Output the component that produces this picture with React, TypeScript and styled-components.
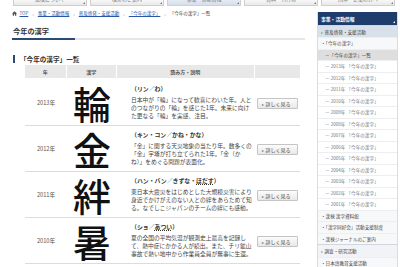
import styled, { createGlobalStyle } from 'styled-components';

const GlobalStyle = createGlobalStyle`
  html, body {
    margin: 0;
    padding: 0;
    background: #ffffff;
  }
  body {
    font-family: "Noto Sans CJK JP", "Noto Sans", sans-serif;
    overflow: hidden;
  }
`;

const tabs = ['漢検について', '検定のご案内', '事業・活動情報', '資料・刊行物', '団体・企業の方へ'];

type Entry = {
  year: string;
  kanji: string;
  reading: React.ReactNode;
  lines: string[];
};

const entries: Entry[] = [
  {
    year: '2013年',
    kanji: '輪',
    reading: '（リン／わ）',
    lines: [
      '日本中が「輪」になって歓喜にわいた年。人と',
      'のつながりの「輪」を感じた1年。未来に向け',
      'た更なる「輪」を実感、注目。',
    ],
  },
  {
    year: '2012年',
    kanji: '金',
    reading: '（キン・コン／かね・かな）',
    lines: [
      '「金」に関する天災地象の当たり年。数多くの',
      '「金」字塔が打ち立てられた1年。「金（か',
      'ね）」をめぐる問題が表面化。',
    ],
  },
  {
    year: '2011年',
    kanji: '絆',
    reading: (
      <>
        （ハン・バン／きずな・<u>ほだす</u>）
      </>
    ),
    lines: [
      '東日本大震災をはじめとした大規模災害により',
      '身近でかけがえのない人との絆をあらためて知',
      'る。なでしこジャパンのチームの絆にも感動。',
    ],
  },
  {
    year: '2010年',
    kanji: '暑',
    reading: (
      <>
        （ショ／<u>あつい</u>）
      </>
    ),
    lines: [
      '夏の全国の平均気温が観測史上最高を記録し',
      'て、熱中症にかかる人が続出。また、チリ鉱山',
      '事故で熱い地中から作業員全員が無事に生還。',
    ],
  },
];

const sideYears = [2013, 2012, 2011, 2010, 2009, 2008, 2007, 2006, 2005, 2004, 2003, 2002, 2001];

const App = () => {
  return (
    <>
      <GlobalStyle />
      <Page>
        <TopNav>
          {tabs.map((t, i) => (
            <Tab key={t} active={i === 2}>
              <span>{t}</span>
            </Tab>
          ))}
        </TopNav>
        <Columns>
          <Main>
            <Breadcrumb>
              <svg width="5" height="5" viewBox="0 0 10 10">
                <path d="M5 0.5 L0 5 H1.5 V9.5 H4 V6.5 H6 V9.5 H8.5 V5 H10 Z" fill="#555" />
              </svg>
              <Crumb href="#">TOP</Crumb>
              <Sep>›</Sep>
              <Crumb href="#">事業・活動情報</Crumb>
              <Sep>›</Sep>
              <Crumb href="#">普及啓発・支援活動</Crumb>
              <Sep>›</Sep>
              <Crumb href="#">「今年の漢字」</Crumb>
              <Sep>›</Sep>
              <Current>「今年の漢字」一覧</Current>
            </Breadcrumb>
            <PageTitle>今年の漢字</PageTitle>
            <TitleRule>
              <RuleAccent />
              <RuleRest />
            </TitleRule>
            <SubTitle>「今年の漢字」一覧</SubTitle>
            <Table>
              <HeadCell>年</HeadCell>
              <HeadCell>漢字</HeadCell>
              <HeadCell>読み方・説明</HeadCell>
              <HeadCell />
              {entries.map((e) => (
                <Row key={e.year}>
                  <YearCell>{e.year}</YearCell>
                  <KanjiCell>{e.kanji}</KanjiCell>
                  <DescCell>
                    <Reading>{e.reading}</Reading>
                    {e.lines.map((l) => (
                      <DescLine key={l}>{l}</DescLine>
                    ))}
                  </DescCell>
                  <ButtonCell>
                    <MoreButton>
                      <span>▸</span>詳しく見る
                    </MoreButton>
                  </ButtonCell>
                </Row>
              ))}
            </Table>
          </Main>
          <Side>
            <SideHeader>事業・活動情報</SideHeader>
            <SideItem level={1}>
              <Arrow>›</Arrow>普及啓発・支援活動
            </SideItem>
            <SideItem level={2}>・「今年の漢字」</SideItem>
            <SideItem level={3} selected>
              －「今年の漢字」一覧
            </SideItem>
            {sideYears.map((y) => (
              <SideItem level={3} key={y}>
                － {y}年 「今年の漢字」
              </SideItem>
            ))}
            <SideItem level={2}>・漢検 漢字資料館</SideItem>
            <SideItem level={2}>・「漢字同好会」活動支援制度</SideItem>
            <SideItem level={2}>・漢検ジャーナルのご案内</SideItem>
            <SideItem level={1} tall>
              <Arrow>›</Arrow>調査・研究活動
            </SideItem>
            <SideItem level={2}>・日本語教育支援活動</SideItem>
          </Side>
        </Columns>
      </Page>
    </>
  );
};

export default App;

const Page = styled.div`
  width: 400px;
  height: 267px;
  overflow: hidden;
  background: #fff;
`;

const TopNav = styled.div`
  display: flex;
  gap: 3px;
  padding-left: 13px;
  height: 6px;
  overflow: hidden;
`;

const Tab = styled.div<{ active?: boolean }>`
  position: relative;
  width: 74px;
  height: 6px;
  box-sizing: border-box;
  border: 1px solid #cfcfcf;
  border-top: none;
  background: ${(p) => (p.active ? 'linear-gradient(#e6ebf3, #d5deeb)' : 'linear-gradient(#f8f8f8, #e9e9e9)')};
  overflow: hidden;
  span {
    display: block;
    text-align: center;
    font-size: 5px;
    line-height: 5px;
    color: #777;
    margin-top: -4px;
  }
  &::after {
    content: '';
    position: absolute;
    right: 1px;
    bottom: 1px;
    border-left: 2px solid transparent;
    border-bottom: 2px solid #777;
  }
`;

const Columns = styled.div`
  display: flex;
  align-items: flex-start;
  gap: 12px;
  padding-left: 12px;
`;

const Main = styled.div`
  width: 293px;
`;

const Breadcrumb = styled.div`
  display: flex;
  align-items: center;
  gap: 2.5px;
  height: 6px;
  margin-top: 4px;
  font-size: 4.5px;
  white-space: nowrap;
`;

const Crumb = styled.a`
  color: #2a56a8;
  text-decoration: underline;
`;

const Sep = styled.span`
  color: #999;
  font-size: 5px;
  padding: 0 1.5px;
`;

const Current = styled.span`
  color: #444;
`;

const PageTitle = styled.div`
  margin-top: 11px;
  padding-left: 1px;
  height: 8px;
  line-height: 8px;
  font-size: 7.2px;
  font-weight: 700;
  color: #333;
`;

const TitleRule = styled.div`
  display: flex;
  margin-top: 3px;
  height: 2px;
`;

const RuleAccent = styled.div`
  width: 63px;
  background: #2d4a72;
`;

const RuleRest = styled.div`
  flex: 1;
  background: #e6e6e6;
`;

const SubTitle = styled.div`
  margin-top: 15px;
  margin-left: 1px;
  height: 8px;
  line-height: 8px;
  border-left: 2.5px solid #2d4a72;
  padding-left: 5px;
  font-size: 6.6px;
  font-weight: 700;
  color: #333;
`;

const Table = styled.div`
  display: grid;
  grid-template-columns: 42px 50px 138px 45px;
  margin-top: 2px;
  margin-left: 13px;
  width: 275px;
`;

const HeadCell = styled.div`
  height: 13px;
  line-height: 13px;
  margin-right: 1.5px;
  margin-bottom: 2px;
  background: #e8e8e8;
  text-align: center;
  font-size: 5px;
  font-weight: 700;
  color: #555;
  &:nth-child(4) {
    margin-right: 0;
  }
`;

const Row = styled.div`
  display: contents;
`;

const cell = `
  height: 46px;
  box-sizing: border-box;
  border-bottom: 1px solid #dcdcdc;
`;

const YearCell = styled.div`
  ${cell};
  display: flex;
  align-items: center;
  justify-content: center;
  font-size: 5.6px;
  color: #555;
`;

const KanjiCell = styled.div`
  ${cell};
  display: flex;
  align-items: center;
  justify-content: center;
  font-size: 38px;
  line-height: 1;
  font-weight: 500;
  color: #111;
`;

const DescCell = styled.div`
  ${cell};
  padding: 5px 0 0 14px;
  white-space: nowrap;
`;

const Reading = styled.div`
  height: 8px;
  line-height: 8px;
  margin-bottom: 3px;
  font-size: 5.9px;
  font-weight: 700;
  color: #333;
  u {
    text-decoration: underline dotted;
  }
`;

const DescLine = styled.div`
  height: 8px;
  line-height: 8px;
  font-size: 5.76px;
  color: #444;
`;

const ButtonCell = styled.div`
  ${cell};
  display: flex;
  align-items: center;
  justify-content: center;
  padding-top: 2px;
`;

const MoreButton = styled.div`
  display: flex;
  align-items: center;
  gap: 1.5px;
  width: 41px;
  height: 11px;
  box-sizing: border-box;
  padding-left: 4px;
  border: 1px solid #c4c4c4;
  border-radius: 1px;
  background: linear-gradient(#fcfcfc, #e8e8e8);
  font-size: 5px;
  color: #444;
  span {
    font-size: 4px;
    color: #777;
  }
`;

const Side = styled.div`
  width: 81px;
  margin-top: 6px;
  box-sizing: border-box;
  border-left: 1px solid #d9dde3;
  border-right: 1px solid #d9dde3;
`;

const SideHeader = styled.div`
  position: relative;
  height: 13px;
  line-height: 13px;
  padding-left: 3px;
  background: #1e3d6d;
  color: #fff;
  font-size: 4.8px;
  font-weight: 700;
  &::after {
    content: '';
    position: absolute;
    right: 2px;
    bottom: 2px;
    border-left: 2px solid transparent;
    border-bottom: 2px solid #fff;
  }
`;

const SideItem = styled.div<{ level: number; selected?: boolean; tall?: boolean }>`
  height: ${(p) => (p.level < 3 && !p.tall && p.level === 1 ? 12 : p.tall ? 12.5 : p.level === 2 ? 11.5 : 11.5)}px;
  line-height: ${(p) => (p.tall ? 12.5 : p.level === 1 ? 12 : 11.5)}px;
  box-sizing: border-box;
  border-top: 1px solid ${(p) => (p.level === 1 ? '#cfd6df' : '#eceef1')};
  padding-left: ${(p) => (p.level === 3 ? 7 : 3)}px;
  font-size: 4.6px;
  white-space: nowrap;
  overflow: hidden;
  color: ${(p) => (p.level === 3 && !p.selected ? '#777' : '#444')};
  background: ${(p) =>
    p.selected ? '#dedede' : p.level === 1 ? (p.tall ? '#f1f3f6' : '#d8e0e9') : p.level === 2 ? '#f7f8fa' : '#fff'};
`;

const Arrow = styled.span`
  font-weight: 700;
  margin-right: 2px;
  color: #333;
`;
